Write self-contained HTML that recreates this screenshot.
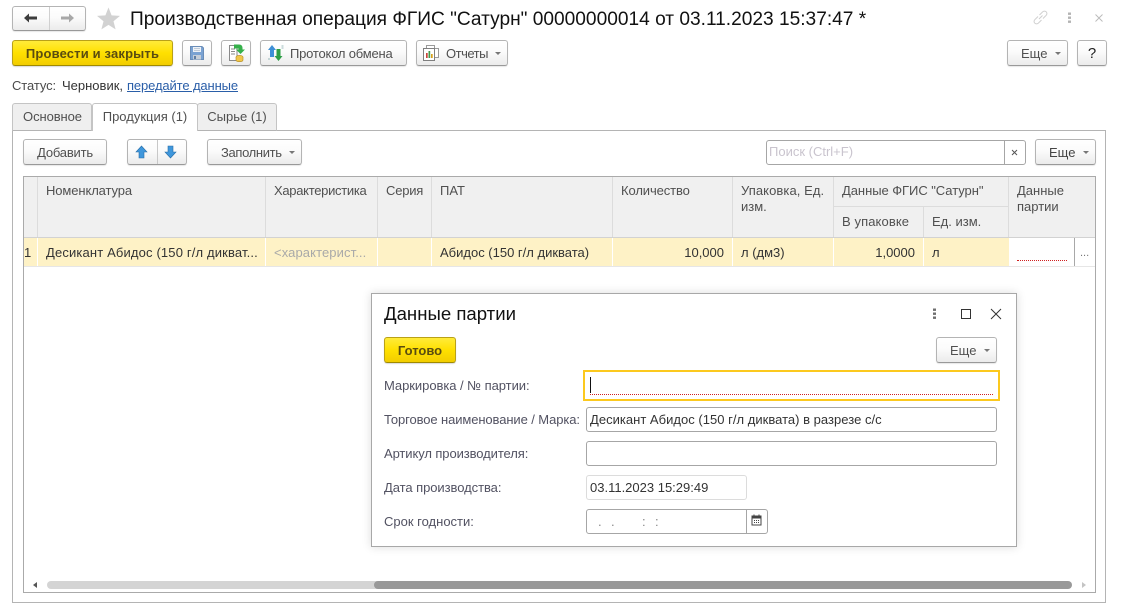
<!DOCTYPE html>
<html lang="ru"><head><meta charset="utf-8"><title>Производственная операция</title>
<style>
html,body{margin:0;padding:0;background:#fff}
#p{position:relative;width:1126px;height:615px;overflow:hidden;background:#fff;font:13px/16px "Liberation Sans",Arial,sans-serif;color:#505050}
#p div,#p span.a,#p svg{position:absolute}
.t{white-space:nowrap}
.b{box-sizing:border-box;border:1px solid #b4b4b4;border-bottom-color:#999;border-radius:3px;background:linear-gradient(#fff 0,#fbfbfb 45%,#ebebeb 100%);box-shadow:0 1px 1px rgba(0,0,0,.1);text-align:center;line-height:25px;white-space:nowrap}
.y{box-sizing:border-box;border:1px solid #b9a118;border-bottom-color:#a08a00;border-radius:3px;background:linear-gradient(#ffeb3a 0,#ffe000 50%,#f2cd00 100%);box-shadow:0 1px 1px rgba(0,0,0,.15);text-align:center;line-height:25px;font-weight:bold;color:#5a4c10;white-space:nowrap}
.c{position:absolute;width:0;height:0;border-left:3px solid transparent;border-right:3px solid transparent;border-top:3px solid #777}
.h{background:#f0f0f0}
.r{background:#fef2c6}
.f{box-sizing:border-box;border:1px solid #a6a6a6;border-radius:3px;background:#fff;color:#333;line-height:23px;padding-left:3px;white-space:nowrap}
.l{color:#525262;white-space:nowrap}
</style></head><body><div id="p">

<!-- top nav -->
<div class="b" style="left:12px;top:6px;width:74px;height:25px"></div>
<div style="left:49px;top:7px;width:1px;height:23px;background:#d0d0d0"></div>
<svg style="left:23px;top:12px" width="16" height="12" viewBox="0 0 16 12"><path d="M1 6 L6 1.5 V4.5 H14 V7.5 H6 V10.5Z" fill="#3c3c3c"/></svg>
<svg style="left:59px;top:12px" width="16" height="12" viewBox="0 0 16 12"><path d="M15 6 L10 1.5 V4.5 H2 V7.5 H10 V10.5Z" fill="#a8a8a8"/></svg>
<svg style="left:96px;top:7px" width="25" height="23" viewBox="0 0 25 23"><path d="M12.5 0.5 L15.6 8.4 L24 8.9 L17.5 14.2 L19.6 22.4 L12.5 17.9 L5.4 22.4 L7.5 14.2 L1 8.9 L9.4 8.4Z" fill="#d2d2d2"/></svg>
<div class="t" style="left:130px;top:8px;font-size:19.14px;line-height:24px;color:#111">Производственная операция ФГИС "Сатурн" 00000000014 от 03.11.2023 15:37:47 *</div>

<svg style="left:1032px;top:9px" width="17" height="17" viewBox="0 0 17 17" fill="none" stroke="#cfcfcf" stroke-width="1"><path d="M7 10 L10.5 6.5 M6 7.5 L2.8 10.7 a2.4 2.4 0 0 0 3.5 3.5 L9.5 11 M7.5 6 L10.7 2.8 a2.4 2.4 0 0 1 3.5 3.5 L11 9.5"/></svg>
<svg style="left:1067px;top:12px" width="5" height="12" viewBox="0 0 5 12" fill="#b4b4b4"><rect x="1" y="0.5" width="3" height="2.4"/><rect x="1" y="4.5" width="3" height="2.4"/><rect x="1" y="8.5" width="3" height="2.4"/></svg>
<svg style="left:1094px;top:13px" width="10" height="10" viewBox="0 0 10 10" stroke="#bcbcbc" stroke-width="1"><path d="M1.5 1.5 L8.5 8.5 M8.5 1.5 L1.5 8.5"/></svg>

<!-- command bar -->
<div class="y" style="left:12px;top:40px;width:161px;height:26px;letter-spacing:.16px">Провести и закрыть</div>
<div class="b" style="left:182px;top:40px;width:30px;height:26px"></div>
<svg style="left:189px;top:45px" width="16" height="16" viewBox="0 0 16 16"><path d="M1.5 1.5 H13 L14.5 3 V14.5 H1.5Z" fill="#7aa2d2" stroke="#6a8db8"/><rect x="4" y="2" width="8" height="5" fill="#eef2f7"/><path d="M5 3.500h6M5 5.500h6" stroke="#c0cbd8"/><rect x="4" y="10" width="8" height="4.500" fill="#c6ced8"/><rect x="5" y="11" width="2" height="3" fill="#5f7da3"/></svg>
<div class="b" style="left:221px;top:40px;width:30px;height:26px"></div>
<svg style="left:228px;top:43px" width="18" height="20" viewBox="0 0 18 20"><path d="M1.5 2.5 H9 V17.5 H1.5Z" fill="#fff" stroke="#8a8a8a"/><path d="M3 6h4M3 8.5h4M3 11h4" stroke="#8a8a8a"/><ellipse cx="11.5" cy="14" rx="3.5" ry="1.6" fill="#f0c64a" stroke="#b28a1e" stroke-width=".6"/><path d="M8 14v3c0 1 1.5 1.700 3.500 1.700s3.500-.7 3.500-1.700v-3" fill="#f0c64a" stroke="#b28a1e" stroke-width=".6"/><path d="M6 1.500h5c2.500 0 3.500 1.500 3.500 3.500v1.500H17L12.500 11 8 6.500h2.500V5.500H6Z" fill="#35b04a"/></svg>
<div class="b" style="left:260px;top:40px;width:147px;height:26px;text-align:left;padding-left:29px;letter-spacing:-.2px">Протокол обмена</div>
<svg style="left:267px;top:44px" width="17" height="18" viewBox="0 0 17 18"><path d="M5 1 L9 6 H7 V13 H3 V6 H1Z" fill="#3d8fd6"/><path d="M11.500 17 L7.500 12 H9.500 V5 H13.500 V12 H15.500Z" fill="#2e9e46"/><path d="M14.500 2h2M14.500 4h2M1 15h2" stroke="#9bb" stroke-width="1"/></svg>
<div class="b" style="left:416px;top:40px;width:92px;height:26px;text-align:left;padding-left:29px;letter-spacing:-.5px">Отчеты</div>
<svg style="left:423px;top:45px" width="16" height="16" viewBox="0 0 16 16"><rect x="3.500" y="0.500" width="8" height="4" fill="#fff" stroke="#9a9a9a"/><rect x="11.500" y="3.500" width="4" height="9" fill="#fff" stroke="#9a9a9a"/><rect x="0.500" y="3.500" width="11" height="12" fill="#fff" stroke="#7f7f7f"/><rect x="3" y="8" width="1.700" height="5" fill="#c9463d"/><rect x="5.500" y="6" width="1.700" height="7" fill="#3f9a4a"/><rect x="8" y="9" width="1.700" height="4" fill="#d8a21f"/></svg>
<span class="c" style="left:495px;top:52px"></span>
<div class="b" style="left:1007px;top:40px;width:61px;height:26px;text-align:left;padding-left:13px">Еще</div>
<span class="c" style="left:1055px;top:52px"></span>
<div class="b" style="left:1077px;top:40px;width:30px;height:26px;color:#222;font-size:15px">?</div>

<!-- status -->
<div class="t" style="left:12px;top:78px;color:#4b4b4b;letter-spacing:-.1px">Статус:</div>
<div class="t" style="left:62px;top:78px;color:#333">Черновик,</div>
<div class="t" style="left:127px;top:78px;color:#2a5ea8;text-decoration:underline;letter-spacing:-.12px">передайте данные</div>

<!-- panel and tabs -->
<div style="left:12px;top:130px;width:1094px;height:473px;box-sizing:border-box;border:1px solid #b4b4b4"></div>
<div style="left:12px;top:103px;width:80px;height:28px;box-sizing:border-box;border:1px solid #c4c4c4;border-bottom:1px solid #b4b4b4;background:#efefef;border-radius:3px 3px 0 0;text-align:center;line-height:26px;letter-spacing:-.08px;padding-left:1px">Основное</div>
<div style="left:197px;top:103px;width:80px;height:28px;box-sizing:border-box;border:1px solid #c4c4c4;border-bottom:1px solid #b4b4b4;background:#efefef;border-radius:3px 3px 0 0;text-align:center;line-height:26px">Сырье (1)</div>
<div style="left:92px;top:103px;width:106px;height:28px;box-sizing:border-box;border:1px solid #c4c4c4;border-bottom:0;background:#fff;border-radius:3px 3px 0 0;text-align:center;line-height:26px">Продукция (1)</div>

<!-- toolbar -->
<div class="b" style="left:23px;top:139px;width:84px;height:26px;letter-spacing:-.2px">Добавить</div>
<div class="b" style="left:127px;top:139px;width:60px;height:26px"></div>
<div style="left:157px;top:140px;width:1px;height:24px;background:#c8c8c8"></div>
<svg style="left:135px;top:145px" width="13" height="14" viewBox="0 0 13 14"><path d="M6.500 1 L12 7 H9 V13 H4 V7 H1Z" fill="#3f97dc" stroke="#2a6fa8" stroke-width=".6"/></svg>
<svg style="left:164px;top:145px" width="13" height="14" viewBox="0 0 13 14"><path d="M6.500 13 L12 7 H9 V1 H4 V7 H1Z" fill="#3f97dc" stroke="#2a6fa8" stroke-width=".6"/></svg>
<div class="b" style="left:207px;top:139px;width:95px;height:26px;text-align:left;padding-left:13px;letter-spacing:-.35px">Заполнить</div>
<span class="c" style="left:289px;top:151px"></span>
<div style="left:766px;top:140px;width:260px;height:25px;box-sizing:border-box;border:1px solid #a6a6a6;border-radius:3px;background:#fff"></div>
<div style="left:1004px;top:140px;width:1px;height:25px;background:#a6a6a6"></div>
<div class="t" style="left:769px;top:144px;color:#c9c4ce">Поиск (Ctrl+F)</div>
<svg style="left:1011px;top:149px" width="7" height="7" viewBox="0 0 7 7" stroke="#555" stroke-width="1"><path d="M1 1 L6 6 M6 1 L1 6"/></svg>
<div class="b" style="left:1035px;top:139px;width:61px;height:26px;text-align:left;padding-left:13px;color:#444">Еще</div>
<span class="c" style="left:1083px;top:151px"></span>

<!-- table -->
<div style="left:23px;top:176px;width:1073px;height:417px;box-sizing:border-box;border:1px solid #aaa"></div>
<div class="h" style="left:24px;top:177px;width:1071px;height:60px"></div>
<div style="left:24px;top:237px;width:1071px;height:1px;background:#d2d2d2"></div>
<div class="r" style="left:24px;top:238px;width:985px;height:28px"></div>
<div style="left:24px;top:266px;width:1071px;height:1px;background:#e6e6e6"></div>
<!-- col separators header -->
<div style="left:37px;top:177px;width:1px;height:60px;background:#dcdcdc"></div>
<div style="left:265px;top:177px;width:1px;height:60px;background:#dcdcdc"></div>
<div style="left:377px;top:177px;width:1px;height:60px;background:#dcdcdc"></div>
<div style="left:431px;top:177px;width:1px;height:60px;background:#dcdcdc"></div>
<div style="left:612px;top:177px;width:1px;height:60px;background:#dcdcdc"></div>
<div style="left:732px;top:177px;width:1px;height:60px;background:#dcdcdc"></div>
<div style="left:833px;top:177px;width:1px;height:60px;background:#dcdcdc"></div>
<div style="left:923px;top:207px;width:1px;height:30px;background:#dcdcdc"></div>
<div style="left:1008px;top:177px;width:1px;height:60px;background:#dcdcdc"></div>
<div style="left:833px;top:206px;width:175px;height:1px;background:#dcdcdc"></div>
<!-- col separators row -->
<div style="left:37px;top:238px;width:1px;height:28px;background:#fff"></div>
<div style="left:265px;top:238px;width:1px;height:28px;background:#fff"></div>
<div style="left:377px;top:238px;width:1px;height:28px;background:#fff"></div>
<div style="left:431px;top:238px;width:1px;height:28px;background:#fff"></div>
<div style="left:612px;top:238px;width:1px;height:28px;background:#fff"></div>
<div style="left:732px;top:238px;width:1px;height:28px;background:#fff"></div>
<div style="left:833px;top:238px;width:1px;height:28px;background:#fff"></div>
<div style="left:923px;top:238px;width:1px;height:28px;background:#fff"></div>
<div style="left:1074px;top:238px;width:1px;height:28px;background:#a8a8a8"></div>
<!-- headers -->
<div class="t" style="left:46px;top:183px;letter-spacing:-.1px">Номенклатура</div>
<div class="t" style="left:274px;top:183px;letter-spacing:-.3px">Характеристика</div>
<div class="t" style="left:386px;top:183px;letter-spacing:-.2px">Серия</div>
<div class="t" style="left:440px;top:183px">ПАТ</div>
<div class="t" style="left:621px;top:183px;letter-spacing:-.1px">Количество</div>
<div class="t" style="left:741px;top:183px;letter-spacing:.08px">Упаковка, Ед.</div>
<div class="t" style="left:741px;top:199px">изм.</div>
<div class="t" style="left:842px;top:183px;letter-spacing:-.05px">Данные ФГИС "Сатурн"</div>
<div class="t" style="left:842px;top:214px;letter-spacing:.1px">В упаковке</div>
<div class="t" style="left:932px;top:214px">Ед. изм.</div>
<div class="t" style="left:1017px;top:183px">Данные</div>
<div class="t" style="left:1017px;top:199px">партии</div>
<!-- row -->
<div class="t" style="left:24px;top:245px;color:#333">1</div>
<div class="t" style="left:46px;top:245px;color:#333;letter-spacing:.15px">Десикант Абидос (150 г/л дикват...</div>
<div class="t" style="left:274px;top:245px;color:#a9a9a9;letter-spacing:.1px">&lt;характерист...</div>
<div class="t" style="left:440px;top:245px;color:#333">Абидос (150 г/л диквата)</div>
<div class="t" style="left:613px;top:245px;width:111px;text-align:right;color:#333">10,000</div>
<div class="t" style="left:741px;top:245px;color:#333">л (дм3)</div>
<div class="t" style="left:834px;top:245px;width:81px;text-align:right;color:#333">1,0000</div>
<div class="t" style="left:932px;top:245px;color:#333">л</div>
<div style="left:1017px;top:260px;width:50px;height:0;border-top:1px dotted #d02020"></div>
<div class="t" style="left:1080px;top:245px;color:#777;font-size:11px">...</div>

<!-- scrollbar -->
<svg style="left:32px;top:581px" width="6" height="8" viewBox="0 0 6 8"><path d="M5 1 V7 L1 4Z" fill="#555"/></svg>
<div style="left:47px;top:581px;width:335px;height:8px;background:#d4d4d4;border-radius:4px"></div>
<div style="left:374px;top:581px;width:698px;height:8px;background:#999;border-radius:4px"></div>
<svg style="left:1081px;top:581px" width="6" height="8" viewBox="0 0 6 8"><path d="M1 1 V7 L5 4Z" fill="#c4c4c4"/></svg>

<!-- dialog -->
<div style="left:371px;top:293px;width:646px;height:254px;box-sizing:border-box;border:1px solid #a8a8a8;background:#fff;box-shadow:0 0 9px rgba(0,0,0,.14)"></div>
<div class="t" style="left:384px;top:302px;font-size:18.6px;line-height:24px;color:#111">Данные партии</div>
<svg style="left:932px;top:308px" width="5" height="12" viewBox="0 0 5 12" fill="#6f6f6f"><rect x="1" y="0.500" width="3" height="2.400"/><rect x="1" y="4.500" width="3" height="2.400"/><rect x="1" y="8.500" width="3" height="2.400"/></svg>
<div style="left:961px;top:309px;width:10px;height:10px;box-sizing:border-box;border:1px solid #333"></div>
<svg style="left:990px;top:308px" width="12" height="12" viewBox="0 0 12 12" stroke="#333" stroke-width="1"><path d="M1 1 L11 11 M11 1 L1 11"/></svg>

<div class="y" style="left:384px;top:337px;width:72px;height:26px">Готово</div>
<div class="b" style="left:936px;top:337px;width:61px;height:26px;text-align:left;padding-left:13px">Еще</div>
<span class="c" style="left:984px;top:349px"></span>

<div class="l" style="left:384px;top:378px;letter-spacing:-.05px">Маркировка / № партии:</div>
<div class="l" style="left:384px;top:412px;letter-spacing:-.1px">Торговое наименование / Марка:</div>
<div class="l" style="left:384px;top:446px;letter-spacing:-.09px">Артикул производителя:</div>
<div class="l" style="left:384px;top:480px;letter-spacing:-.06px">Дата производства:</div>
<div class="l" style="left:384px;top:514px">Срок годности:</div>

<div style="left:583px;top:370px;width:417px;height:31px;box-sizing:border-box;border:2px solid #fcc91e;background:#fff"></div>
<div style="left:590px;top:377px;width:1px;height:16px;background:#111"></div>
<div style="left:590px;top:394px;width:403px;height:0;border-top:1px dotted #d02020"></div>
<div class="f" style="left:586px;top:407px;width:411px;height:25px;letter-spacing:.02px">Десикант Абидос (150 г/л диквата) в разрезе с/с</div>
<div class="f" style="left:586px;top:441px;width:411px;height:25px"></div>
<div class="f" style="left:586px;top:475px;width:161px;height:25px;border-color:#dcdcdc">03.11.2023 15:29:49</div>
<div class="f" style="left:586px;top:509px;width:182px;height:25px"></div>
<div class="t" style="left:598px;top:514px;color:#888">.</div>
<div class="t" style="left:611px;top:514px;color:#888">.</div>
<div class="t" style="left:642px;top:514px;color:#888">:</div>
<div class="t" style="left:655px;top:514px;color:#888">:</div>
<div style="left:746px;top:509px;width:1px;height:25px;background:#a6a6a6"></div>
<svg style="left:751px;top:514px" width="11" height="12" viewBox="0 0 11 12"><rect x="1" y="2" width="9" height="9" fill="#fff" stroke="#444"/><rect x="1" y="2" width="9" height="2.500" fill="#444"/><path d="M3 0.500v2M8 0.500v2" stroke="#444"/><path d="M3 6.500h1M5 6.500h1M7 6.500h1M3 8.500h1M5 8.500h1M7 8.500h1" stroke="#444"/></svg>

</div></body></html>
